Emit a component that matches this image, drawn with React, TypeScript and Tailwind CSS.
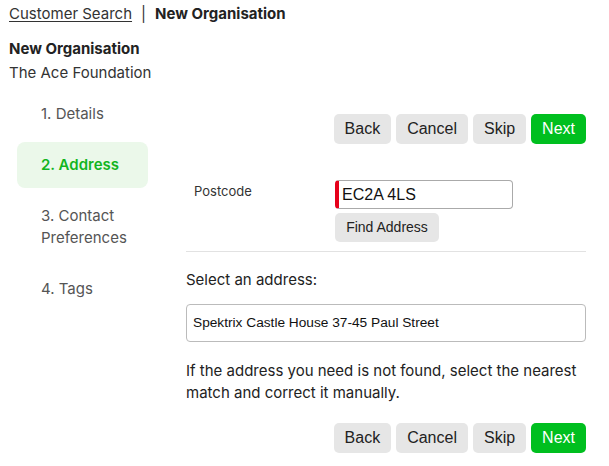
const btn = 'h-[30px] px-[11px] rounded-[5px] bg-[#e6e6e6] text-[16px] text-[#222] font-["Liberation_Sans",sans-serif]';
const nextBtn = 'h-[30px] px-[11px] rounded-[5px] bg-[#00bf1f] text-[16px] text-white font-["Liberation_Sans",sans-serif]';

function ButtonRow() {
  return (
    <div className="flex justify-end gap-[5px]">
      <button className={btn}>Back</button>
      <button className={btn}>Cancel</button>
      <button className={btn}>Skip</button>
      <button className={nextBtn}>Next</button>
    </div>
  );
}

const steps = [
  { label: '1. Details', active: false },
  { label: '2. Address', active: true },
  { label: '3. Contact Preferences', active: false },
  { label: '4. Tags', active: false },
];

export default function App() {
  return (
    <div className="w-[609px] h-[466px] bg-white text-[#222] font-['Inter',sans-serif] overflow-hidden">
      <div className="pl-[9px] pt-[3px]">
        <div className="flex items-center h-[22px] text-[15px]">
          <a className="underline underline-offset-2 text-[#333]">Customer Search</a>
          <span className="mx-[9px] text-[#333]">|</span>
          <span className="font-bold">New Organisation</span>
        </div>
        <div className="mt-[12px] text-[15px] leading-[24px] font-bold">New Organisation</div>
        <div className="text-[15px] leading-[24px] text-[#333]">The Ace Foundation</div>
      </div>

      <div className="flex mt-[6px]">
        <nav className="ml-[17px] w-[131px] flex flex-col gap-[5px]">
          {steps.map((s) => (
            <div
              key={s.label}
              className={
                s.active
                  ? 'rounded-[8px] bg-[#ebf8ea] pl-[24px] pr-2 py-[12px] text-[15px] leading-[22px] font-semibold text-[#12b51f]'
                  : 'pl-[24px] pr-2 py-[12px] text-[15px] leading-[22px] text-[#555]'
              }
            >
              {s.label}
            </div>
          ))}
        </nav>

        <main className="ml-[38px] w-[400px]">
          <div className="mt-[23px]">
            <ButtonRow />
          </div>

          <div className="flex mt-[36px]">
            <label className="w-[149px] pl-[8px] pt-[2px] text-[13px] leading-[18px] text-[#333]">Postcode</label>
            <div className="flex flex-col items-start">
              <div className="w-[178px] h-[29px] flex items-center border border-[#aaa] border-l-[4px] border-l-[#e6001a] rounded-[4px] pl-[3px] text-[16px] font-['Liberation_Sans',sans-serif] text-[#111]">
                EC2A 4LS
              </div>
              <button className="mt-[4px] h-[29px] w-[104px] rounded-[5px] bg-[#e6e6e6] text-[14px] text-[#222] font-['Liberation_Sans',sans-serif]">
                Find Address
              </button>
            </div>
          </div>

          <div className="mt-[9px] border-t border-[#e2e2e2]" />

          <div className="mt-[17px] text-[15px] leading-[22px] text-[#222]">Select an address:</div>

          <div className="mt-[13px] h-[38px] flex items-center border border-[#bbb] rounded-[4px] pl-[6px] text-[13.7px] font-['Liberation_Sans',sans-serif] text-[#111]">
            Spektrix Castle House 37-45 Paul Street
          </div>

          <p className="mt-[18px] text-[15px] leading-[22px] text-[#222]">
            If the address you need is not found, select the nearest match and correct it manually.
          </p>

          <div className="mt-[19px]">
            <ButtonRow />
          </div>
        </main>
      </div>
    </div>
  );
}
